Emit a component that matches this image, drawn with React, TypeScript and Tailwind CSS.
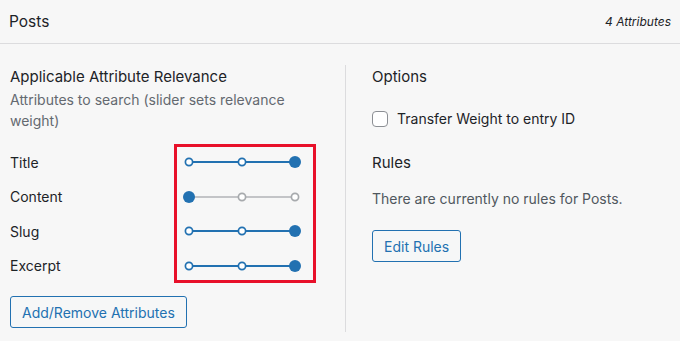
import React from 'react';

// Relevance weights for each attribute (0 = off, 1, 2 = max)
const attributes: { label: string; weight: number }[] = [
  { label: 'Title', weight: 2 },
  { label: 'Content', weight: 0 },
  { label: 'Slug', weight: 2 },
  { label: 'Excerpt', weight: 2 },
];

function WeightSlider({ weight }: { weight: number }) {
  const stops = [6, 59, 112];
  const active = weight > 0;
  const lineColor = active ? '#2271b1' : '#c3c4c7';
  return (
    <svg width="118" height="14" viewBox="0 0 118 14" className="block">
      <line x1={stops[0]} y1="7" x2={stops[2]} y2="7" stroke={lineColor} strokeWidth="2" />
      {stops.map((x, i) =>
        i === weight ? (
          <circle key={i} cx={x} cy="7" r="6" fill="#2271b1" />
        ) : (
          <circle
            key={i}
            cx={x}
            cy="7"
            r="3.6"
            fill="#fff"
            stroke={active ? '#2271b1' : '#a7aaad'}
            strokeWidth="1.7"
          />
        )
      )}
    </svg>
  );
}

export default function App() {
  return (
    <div
      className="w-[680px] h-[341px] bg-[#f7f7f7] text-[#1d2327] overflow-hidden"
      style={{ fontFamily: 'Inter, "Noto Sans", sans-serif' }}
    >
      {/* Header */}
      <div className="h-[44px] flex items-center justify-between pl-[9px] pr-[9px] border-b border-[#dcdcde]">
        <span className="text-[15.5px]">Posts</span>
        <span className="text-[12px] italic">4 Attributes</span>
      </div>

      <div className="flex">
        {/* Attributes column */}
        <div className="w-[345px] pl-[10px] pt-[23px] relative">
          <h3 className="text-[15px] leading-[20px]">Applicable Attribute Relevance</h3>
          <p className="mt-[2px] text-[14px] leading-[21px] text-[#646970] pr-[10px]">
            Attributes to search (slider sets relevance weight)
          </p>

          <div className="mt-[14px]">
            {attributes.map((attr) => (
              <div key={attr.label} className="h-[34.5px] flex items-center">
                <span className="w-[173px] text-[14px]">{attr.label}</span>
                <WeightSlider weight={attr.weight} />
              </div>
            ))}
          </div>

          {/* highlight annotation */}
          <div className="absolute left-[174px] top-[100px] w-[142px] h-[139px] border-[3px] border-[#e8102a] pointer-events-none" />

          <button className="mt-[13px] h-[32px] px-[11px] rounded-[3px] border border-[#2271b1] bg-[#f6f7f7] text-[#2271b1] text-[14px]">
            Add/Remove Attributes
          </button>
        </div>

        {/* Divider */}
        <div className="w-px bg-[#dcdcde] mt-[21px] h-[267px]" />

        {/* Options column */}
        <div className="pl-[26px] pt-[23px]">
          <h3 className="text-[15px] leading-[20px]">Options</h3>
          <label className="mt-[21px] flex items-center gap-[9px] text-[14px]">
            <span className="w-[16px] h-[16px] rounded-[4px] border border-[#8c8f94] bg-white" />
            Transfer Weight to entry ID
          </label>

          <h3 className="mt-[24px] text-[15px] leading-[20px]">Rules</h3>
          <p className="mt-[16px] text-[14px] leading-[20px] text-[#50575e]">
            There are currently no rules for Posts.
          </p>
          <button className="mt-[21px] h-[32px] px-[11px] rounded-[3px] border border-[#2271b1] bg-[#f6f7f7] text-[#2271b1] text-[14px]">
            Edit Rules
          </button>
        </div>
      </div>
    </div>
  );
}
